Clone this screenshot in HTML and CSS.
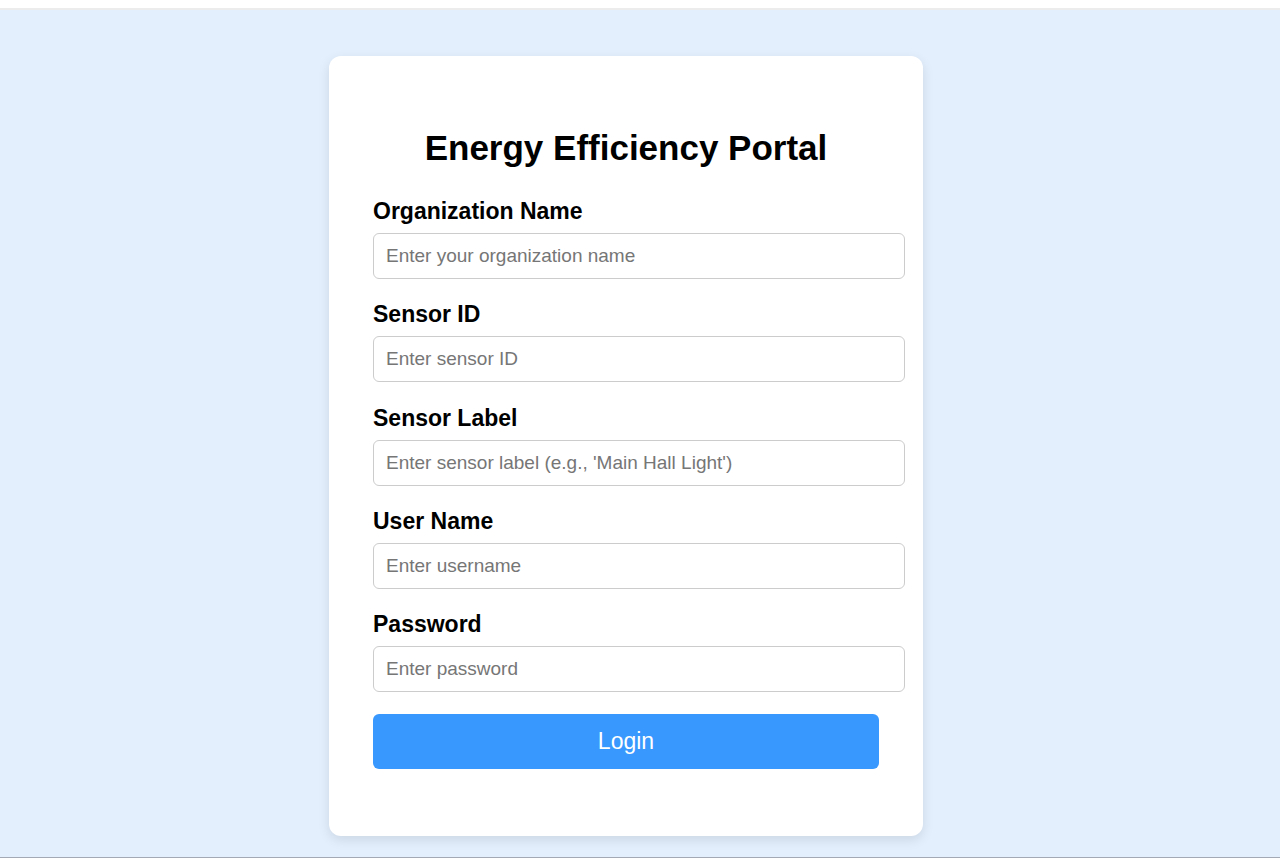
FILE: index.html
```html
<!DOCTYPE html>
<html lang="en">
<head>
<meta charset="utf-8">
<title>Energy Efficiency Portal</title>
<link rel="stylesheet" href="styles.css">
</head>
<body>
<div class="topbar"></div>
<main class="page">
  <div class="card">
    <h1 class="title">Energy Efficiency Portal</h1>
    <form class="form">
      <div class="group">
        <label class="label" for="org">Organization Name</label>
        <input class="input" id="org" type="text" placeholder="Enter your organization name">
      </div>
      <div class="group">
        <label class="label" for="sid">Sensor ID</label>
        <input class="input" id="sid" type="text" placeholder="Enter sensor ID">
      </div>
      <div class="group">
        <label class="label" for="slabel">Sensor Label</label>
        <input class="input" id="slabel" type="text" placeholder="Enter sensor label (e.g., 'Main Hall Light')">
      </div>
      <div class="group">
        <label class="label" for="user">User Name</label>
        <input class="input" id="user" type="text" placeholder="Enter username">
      </div>
      <div class="group">
        <label class="label" for="pass">Password</label>
        <input class="input" id="pass" type="password" placeholder="Enter password">
      </div>
      <div class="group">
        <button class="button" type="button">Login</button>
      </div>
    </form>
  </div>
</main>
<div class="bottomline"></div>
</body>
</html>
```
FILE: styles.css
```css
html, body {
  margin: 0;
  padding: 0;
}
body {
  font-family: "Liberation Sans", Arial, sans-serif;
  background: #e3effd;
  height: 858px;
  overflow: hidden;
  display: flex;
  flex-direction: column;
}
.topbar {
  height: 8px;
  background: #ffffff;
  border-bottom: 2px solid #ececec;
  flex: none;
}
.page {
  flex: 1;
  padding: 46px 0 0 329px;
}
.card {
  width: 506px;
  padding: 44px;
  background: #ffffff;
  border-radius: 12px;
  box-shadow: 0 4px 12px rgba(0, 0, 0, 0.1);
}
.title {
  margin: 29px 0 32px;
  font-size: 35px;
  line-height: 37px;
  font-weight: bold;
  text-align: center;
  color: #000;
}
.form {
  margin: 0;
}
.group {
  margin-bottom: 22.3px;
}
.label {
  display: block;
  font-size: 23px;
  line-height: 26px;
  font-weight: bold;
  margin-bottom: 9px;
  color: #000;
}
.input {
  display: block;
  width: 506px;
  box-sizing: content-box;
  padding: 0 12px;
  height: 44px;
  border: 1px solid #cccccc;
  border-radius: 6px;
  font-family: "Liberation Sans", Arial, sans-serif;
  font-size: 19px;
  color: #000;
  background: #fff;
  outline: none;
}
.input::placeholder {
  color: #767676;
}
.button {
  display: block;
  width: 506px;
  height: 55px;
  border: none;
  border-radius: 6px;
  background: #3898fd;
  color: #ffffff;
  font-family: "Liberation Sans", Arial, sans-serif;
  font-size: 23px;
  cursor: pointer;
}
.bottomline {
  height: 1px;
  background: #a3a9b5;
  flex: none;
}
```
